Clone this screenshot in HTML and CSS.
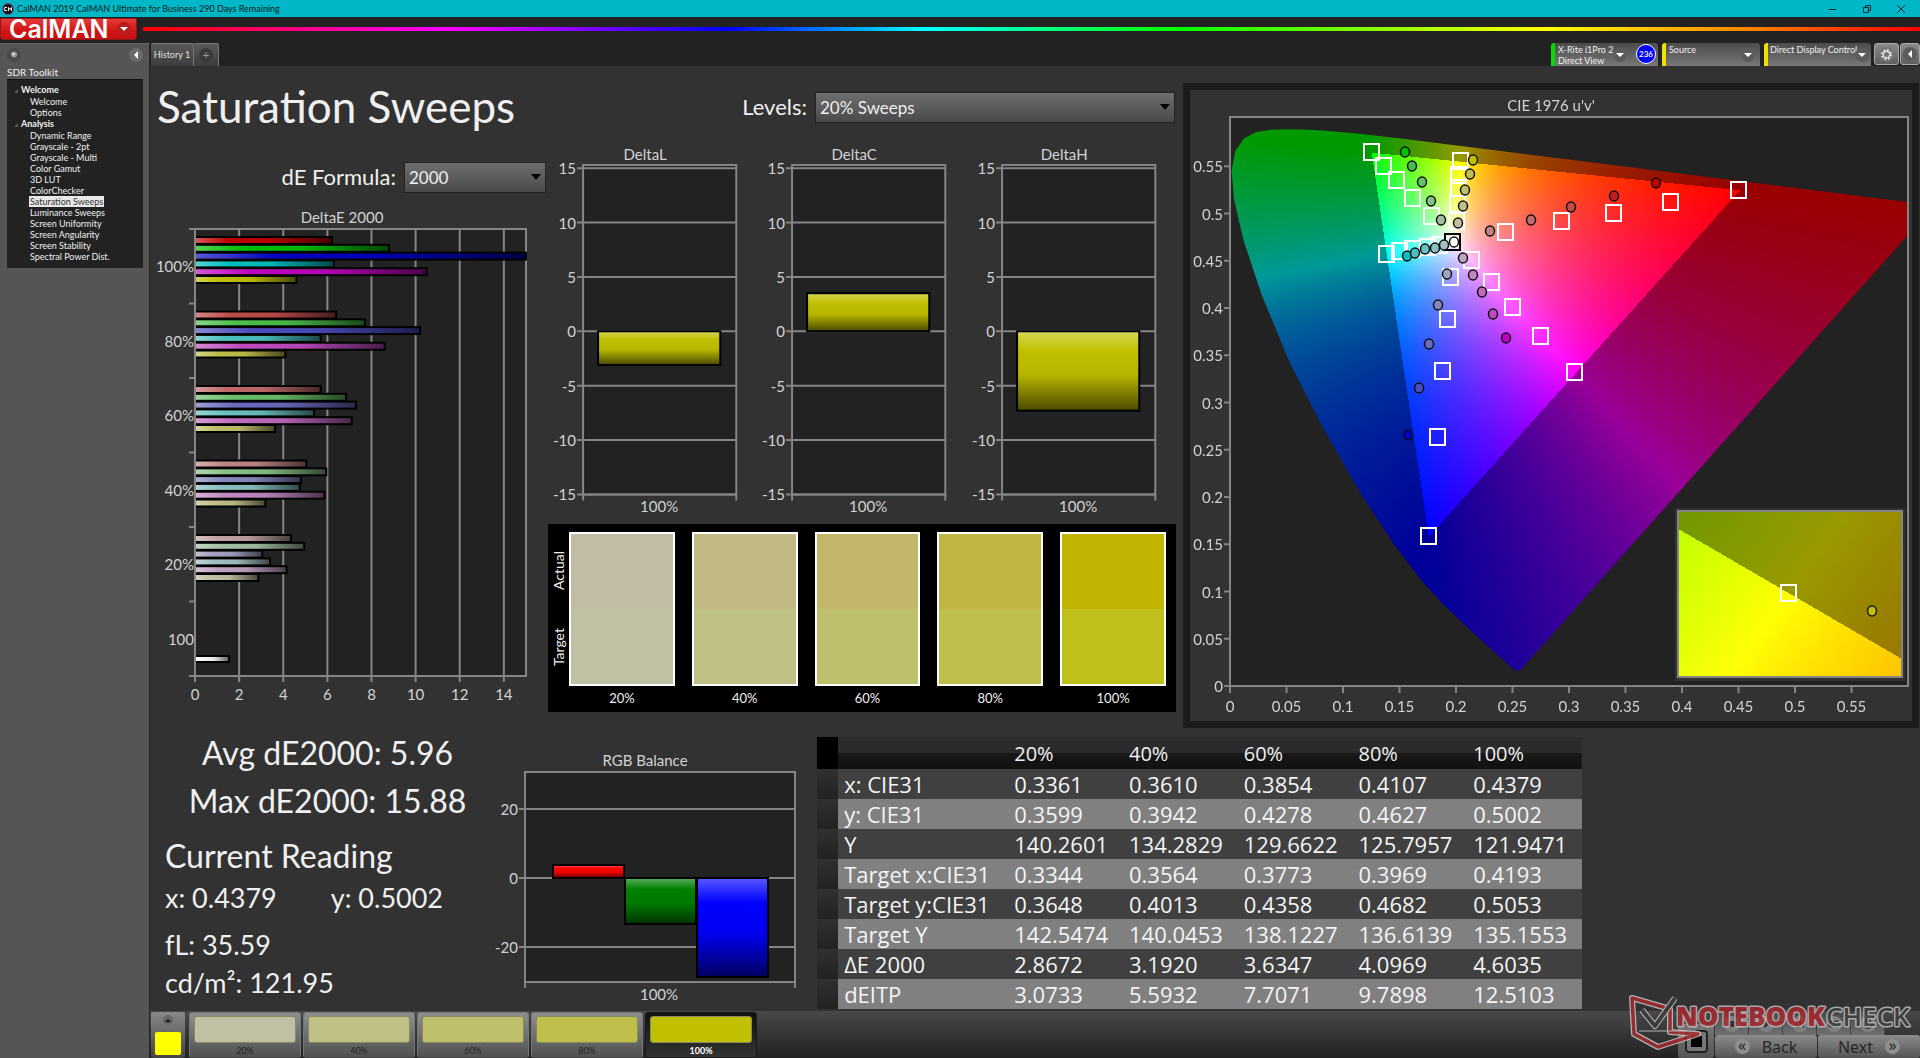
FILE: index.html
```html
<!DOCTYPE html>
<html lang="en">
<head>
<meta charset="utf-8">
<title>CalMAN 2019 CalMAN Ultimate for Business 290 Days Remaining</title>
<link rel="stylesheet" href="styles.css">
</head>
<body>
<div class="titlebar">
  <svg class="app-icon" viewBox="0 0 12 12" aria-hidden="true"><circle cx="6" cy="6" r="5.5" fill="#111" stroke="#a33a8c" stroke-width=".8"/><path d="M5 4.5Q2 3.5 2 6T5 7.500M6.500 8V4.500L8 6.500 9.500 4.500V8" fill="none" stroke="#fff"/></svg>
  <span class="window-title">CalMAN 2019 CalMAN Ultimate for Business 290 Days Remaining</span>
  <button class="win-btn" aria-label="Minimize"><svg viewBox="0 0 10 10"><path d="M1 5.500H8" /></svg></button>
  <button class="win-btn" aria-label="Restore"><svg viewBox="0 0 10 10"><path d="M1.500 3.500H6.500V8.500H1.500ZM3.500 3.500V1.500H8.500V6.500H6.500"/></svg></button>
  <button class="win-btn" aria-label="Close"><svg viewBox="0 0 10 10"><path d="M1 1L9 9M9 1L1 9"/></svg></button>
</div>
<header class="brandbar">
  <button class="brand">CalMAN<span class="knob"><i class="tri-down"></i></span></button>
  <div class="rainbow"></div>
</header>
<div class="shell">
  <aside class="sidebar">
    <div class="side-top">
      <svg class="ball" viewBox="0 0 14 14" aria-hidden="true"><circle cx="7" cy="7" r="7" fill="#4a4a4a"/><circle cx="7" cy="6.500" r="3" fill="#999"/><circle cx="6.500" cy="6" r="1.300" fill="#ddd"/></svg>
      <button class="knob" aria-label="Collapse"><i class="tri-left"></i></button>
    </div>
    <div class="side-title">SDR Toolkit</div>
    <nav class="tree">
      <div class="group">Welcome</div>
      <a href="#">Welcome</a>
      <a href="#">Options</a>
      <div class="group">Analysis</div>
      <a href="#">Dynamic Range</a>
      <a href="#">Grayscale - 2pt</a>
      <a href="#">Grayscale - Multi</a>
      <a href="#">Color Gamut</a>
      <a href="#">3D LUT</a>
      <a href="#">ColorChecker</a>
      <a href="#" class="current">Saturation Sweeps</a>
      <a href="#">Luminance Sweeps</a>
      <a href="#">Screen Uniformity</a>
      <a href="#">Screen Angularity</a>
      <a href="#">Screen Stability</a>
      <a href="#">Spectral Power Dist.</a>
    </nav>
  </aside>
  <div class="workspace">
    <div class="tabs">
      <button class="tab">History 1</button>
      <button class="tab tab-add" aria-label="Add tab"><span class="knob">+</span></button>
      <div class="spacer"></div>
      <button class="device meter"><span>X-Rite i1Pro 2<br>Direct View</span><span class="knob"><i class="tri-down"></i></span><b class="count">236</b></button>
      <button class="device"><span>Source</span><span class="knob"><i class="tri-down"></i></span></button>
      <button class="device wide"><span>Direct Display Control</span><span class="knob"><i class="tri-down"></i></span></button>
      <button class="square" aria-label="Settings"><svg viewBox="0 0 16 16"><circle cx="8" cy="8" r="8" fill="#757575"/><circle cx="8" cy="8" r="4.800" fill="none" stroke="#e6e6e6" stroke-width="2" stroke-dasharray="2 1.770"/><circle cx="8" cy="8" r="3.400" fill="none" stroke="#e6e6e6" stroke-width="1.300"/></svg></button>
      <button class="square last" aria-label="Collapse panel"><span class="knob"><i class="tri-left"></i></span></button>
    </div>
    <main class="content">
      <section class="upper">
        <div class="col-a">
          <h1>Saturation Sweeps</h1>
          <div class="field formula"><label for="formula">dE Formula:</label><span class="select"><select id="formula"><option>2000</option></select></span></div>
          <svg id="deltae" viewBox="0 0 398 507"></svg>
        </div>
        <div class="col-b">
          <div class="field levels"><label for="levels">Levels:</label><span class="select"><select id="levels"><option>20% Sweeps</option></select></span></div>
          <div class="deltas">
            <svg id="deltal" viewBox="0 0 209 378"></svg>
            <svg id="deltac" viewBox="0 0 209 378"></svg>
            <svg id="deltah" viewBox="0 0 209 378"></svg>
          </div>
          <div class="swatches">
            <div class="sides"><span>Actual</span><span>Target</span></div>
            <div class="swatch-row">
              <div class="swatch s20"><i></i>20%</div>
              <div class="swatch s40"><i></i>40%</div>
              <div class="swatch s60"><i></i>60%</div>
              <div class="swatch s80"><i></i>80%</div>
              <div class="swatch s100"><i></i>100%</div>
            </div>
          </div>
        </div>
        <div class="cie">
          <canvas id="gamut" width="722" height="631"></canvas>
          <svg id="ciemarks" viewBox="0 0 722 631"></svg>
        </div>
      </section>
      <section class="lower">
        <div class="readings">
          <p class="big center">Avg dE2000: 5.96</p>
          <p class="big center second">Max dE2000: 15.88</p>
          <h2 class="big">Current Reading</h2>
          <p class="pair"><span>x: 0.4379</span><span>y: 0.5002</span></p>
          <p class="lum">fL: 35.59</p>
          <p>cd/m²: 121.95</p>
        </div>
        <svg id="rgb" viewBox="0 0 310 266"></svg>
        <table>
          <colgroup><col class="c-mark"><col class="c-name"><col><col><col><col><col></colgroup>
          <thead><tr><td></td><th></th><th>20%</th><th>40%</th><th>60%</th><th>80%</th><th>100%</th></tr></thead>
          <tbody>
          <tr><td></td><th>x: CIE31</th><td>0.3361</td><td>0.3610</td><td>0.3854</td><td>0.4107</td><td>0.4379</td></tr>
          <tr><td></td><th>y: CIE31</th><td>0.3599</td><td>0.3942</td><td>0.4278</td><td>0.4627</td><td>0.5002</td></tr>
          <tr><td></td><th>Y</th><td>140.2601</td><td>134.2829</td><td>129.6622</td><td>125.7957</td><td>121.9471</td></tr>
          <tr><td></td><th>Target x:CIE31</th><td>0.3344</td><td>0.3564</td><td>0.3773</td><td>0.3969</td><td>0.4193</td></tr>
          <tr><td></td><th>Target y:CIE31</th><td>0.3648</td><td>0.4013</td><td>0.4358</td><td>0.4682</td><td>0.5053</td></tr>
          <tr><td></td><th>Target Y</th><td>142.5474</td><td>140.0453</td><td>138.1227</td><td>136.6139</td><td>135.1553</td></tr>
          <tr><td></td><th>ΔE 2000</th><td>2.8672</td><td>3.1920</td><td>3.6347</td><td>4.0969</td><td>4.6035</td></tr>
          <tr><td></td><th>dEITP</th><td>3.0733</td><td>5.5932</td><td>7.7071</td><td>9.7898</td><td>12.5103</td></tr>
          </tbody>
        </table>
      </section>
    </main>
    <footer class="bottombar">
      <button class="current-color" aria-label="Current colour"><span><i class="tri-up"></i></span><i class="chip"></i></button>
      <button class="tile t20"><i></i>20%</button>
      <button class="tile t40"><i></i>40%</button>
      <button class="tile t60"><i></i>60%</button>
      <button class="tile t80"><i></i>80%</button>
      <button class="tile t100 active"><i></i>100%</button>
      <div class="spacer"></div>
      <button class="window-btn" aria-label="Pattern window"><i></i></button>
      <div class="transport">
        <div class="media">
          <button aria-label="Stop"><svg viewBox="0 0 16 16"><circle cx="8" cy="8" r="8"/><path d="M5 5h6v6H5z"/></svg></button>
          <button aria-label="Play"><svg viewBox="0 0 16 16"><circle cx="8" cy="8" r="8"/><path d="M6 4l6 4-6 4z"/></svg></button>
          <button aria-label="Step"><svg viewBox="0 0 16 16"><circle cx="8" cy="8" r="8"/><path d="M4 4h2v8H4zM7 4l4 4-4 4zM11 4h1v8h-1z"/></svg></button>
          <button aria-label="Loop"><svg viewBox="0 0 16 16"><circle cx="8" cy="8" r="8"/><path d="M3 8a2.500 2.500 0 0 1 5 0 2.500 2.500 0 0 0 5 0 2.500 2.500 0 0 0-5 0 2.500 2.500 0 0 1-5 0z" class="line"/></svg></button>
          <button aria-label="Refresh"><svg viewBox="0 0 16 16"><circle cx="8" cy="8" r="8"/><path d="M12 8a4 4 0 1 1-2-3.500M10 2v3H7" class="line"/></svg></button>
        </div>
        <div class="pager">
          <button><span class="chev">«</span>Back</button>
          <button>Next<span class="chev">»</span></button>
        </div>
      </div>
      <svg class="watermark" viewBox="0 0 290 60" aria-label="NotebookCheck">
        <g fill="none" stroke-linejoin="round">
          <path d="M4 6L42 17L42 40L70 42L30 55L6 42Z" stroke="#c8c8c8" stroke-width="6"/>
          <path d="M4 6L42 17L42 40L70 42L30 55L6 42Z" stroke="#a52a2f" stroke-width="3.500"/>
          <path d="M11 39H68" stroke="#c8c8c8"/>
          <path d="M14 18L27 34L47 6" stroke="#d0d0d0" stroke-width="6"/>
          <path d="M14 18L27 34L47 6" stroke="#3c3c3c" stroke-width="4"/>
        </g>
        <text x="48" y="34" class="wm-red">NOTEBOOK</text>
        <text x="198" y="34" class="wm-dark">CHECK</text>
      </svg>
    </footer>
  </div>
</div>
<script src="script.js"></script>
</body>
</html>
```
FILE: styles.css
```css
* { box-sizing: border-box; }
body {
  margin: 0; min-height: 100vh; display: flex; flex-direction: column;
  background: #222; color: #f0f0f0; font: 16px/20px Lato, "Open Sans", sans-serif;
}
button, select { font: inherit; color: inherit; border: 0; padding: 0; margin: 0; background: none; }
i { display: block; }
a { color: inherit; text-decoration: none; }
.spacer { flex: 1; }
svg { display: block; }

.titlebar { display: flex; align-items: center; height: 17px; padding-left: 2px; background: #00b7c7; color: #071c20; }
.app-icon { width: 12px; height: 12px; margin-right: 3px; }
.window-title { flex: 1; font-size: 9px; line-height: 17px; }
.win-btn { width: 34px; height: 17px; display: grid; place-items: center; }
.win-btn:last-child { margin-right: 2px; }
.win-btn svg { width: 10px; height: 10px; fill: none; stroke: #072a30; }

.brandbar { display: flex; height: 26px; padding-top: 1px; gap: 6px; }
.brand {
  width: 137px; height: 22px; display: flex; align-items: center; justify-content: space-between;
  padding: 0 5px 0 8px; border: 1px solid #8a1a1a; border-radius: 0 0 3px 3px;
  background: linear-gradient(#e63a3a, #d01414 60%, #c81010); color: #fff; font: 600 25px/20px Inter, sans-serif;
}
.rainbow {
  flex: 1; height: 4px; margin-top: 9px;
  background: linear-gradient(90deg, #f00, #f0f 17%, #00f 33%, #0ff 44%, #0f0 58%, #ff0 79%, #f80 90%, #f00);
}
.knob { width: 14px; height: 14px; border-radius: 7px; display: grid; place-items: center; background: #5c5c5c; flex: none; }
.brand .knob { background: #b81c1c; }
.tri-down { border: 4px solid transparent; border-top-color: #fff; border-bottom-width: 0; }
.tri-left { border: 4px solid transparent; border-right-color: #fff; border-left-width: 0; }
.tri-up { border: 3px solid transparent; border-bottom-color: #111; border-top-width: 0; }

.shell { flex: 1; display: flex; }
.sidebar { width: 150px; flex: none; padding: 4px 6px 0 7px; background: #555; border-right: 1px solid #252525; border-top: 1px solid #666; }
.side-top { display: flex; justify-content: space-between; height: 16px; }
.side-top .knob { background: #6b6b6b; }
.ball { width: 14px; height: 14px; }
.side-title { height: 15px; font-size: 10px; line-height: 16px; }
.tree { padding: 4px 0 6px; background: #222; border-top: 1px solid #111; font-size: 9px; line-height: 11px; }
.tree a { display: block; width: max-content; margin-left: 22px; padding: 0 1px; height: 11px; }
.tree .group { padding-left: 14px; height: 12px; font-weight: bold; line-height: 12px; position: relative; }
.tree .group::before { content: ""; position: absolute; left: 7px; top: 5px; border: 2px solid transparent; border-right-color: #555; border-bottom-color: #555; }
.tree .current { background: #e8e8e8; color: #333; }

.workspace { flex: 1; min-width: 0; display: flex; flex-direction: column; background: #323232; }
.tabs { display: flex; height: 23px; background: #222; padding-left: 1px; }
.tab {
  width: 43px; border: 1px solid #777; border-width: 1px 1px 0 0; border-radius: 2px 2px 0 0; color: #e0e0e0;
  background: linear-gradient(#5a5a5a, #3c3c3c); font-size: 9px; line-height: 22px;
}
.tab-add { width: 25px; display: grid; place-items: center; }
.tab-add .knob { background: #3a3a3a; color: #999; font-size: 12px; line-height: 12px; }
.device {
  display: flex; gap: 4px; width: 98px; margin-right: 4px; padding: 0 5px 0 3px; text-align: left;
  border-left: 4px solid #f0e000; border-radius: 3px 3px 0 0; background: linear-gradient(#4c4c4c, #777);
  font-size: 9px; line-height: 11px; white-space: nowrap;
}
.device > span:first-child { flex: 1; padding-top: 1px; min-width: 0; }
.device .knob { margin-top: 5px; }
.device.meter { width: 107px; border-color: #0d0; padding-right: 2px; }
.device.wide { width: 107px; margin-right: 3px; gap: 0; padding: 0 2px; }
.count {
  width: 20px; height: 20px; margin: 1px 0 0 5px; border: 1px solid #fff; border-radius: 10px; background: #00f;
  text-align: center; font-size: 8px; line-height: 18px;
}
.square { width: 25px; height: 22px; margin-right: 1px; border: 1px solid #aaa; border-radius: 3px; background: linear-gradient(#8a8a8a, #5f5f5f); display: grid; place-items: center; }
.square svg { width: 15px; height: 15px; }
.square.last { width: 20px; margin: 0; }

.content { flex: 1; }
.upper { display: grid; grid-template-columns: 398fr 635fr 737fr; align-items: start; }
.upper > *, .lower > * { min-width: 0; }
.col-a h1 { margin: 0; padding: 12px 0 0 7px; height: 96px; font-weight: 400; font-size: 44px; line-height: 56px; }
.field { display: flex; align-items: center; gap: 8px; height: 30px; font-size: 22px; }
.field.formula { justify-content: flex-end; padding-right: 2px; margin-bottom: 13px; }
.select { position: relative; display: block; }
.select::after { content: ""; position: absolute; right: 5px; top: 12px; border: 5px solid transparent; border-top: 6px solid #000; border-bottom: 0; pointer-events: none; }
.select select {
  appearance: none; display: block; width: 100%; height: 31px; padding: 2px 18px 0 4px; border: 1px solid #222;
  background: linear-gradient(#6e6e6e, #4a4a4a); font-size: 17px; color: #eee;
}
.formula .select { width: 142px; }
.levels { margin: 26px 1px 23px 0; justify-content: flex-end; }
.levels .select { width: 360px; }
#deltae, #rgb { width: 100%; }
.col-b { padding-right: 7px; }
.deltas { display: grid; grid-template-columns: repeat(3, minmax(0, 1fr)); }
.deltas svg { width: 100%; }
.swatches { display: flex; height: 188px; padding: 8px 10px 0 0; background: #000; }
.sides { display: flex; flex-direction: column; width: 21px; height: 153px; justify-content: space-around; align-items: center; }
.sides span { writing-mode: vertical-rl; transform: rotate(180deg); font-size: 14px; line-height: 20px; }
.swatch-row { flex: 1; display: grid; grid-template-columns: repeat(5, minmax(0, 1fr)); gap: 17px; }
.swatch { text-align: center; font-size: 13px; line-height: 24px; }
.swatch i { height: 154px; border: 2px solid #fff; }
.s20 i { background: linear-gradient(#c1bca4 50%, #bfc0a4 50%); }
.s40 i { background: linear-gradient(#c2b985 50%, #c0c186 50%); }
.s60 i { background: linear-gradient(#c2b669 50%, #bfc06b 50%); }
.s80 i { background: linear-gradient(#c1b543 50%, #bec04b 50%); }
.s100 i { background: linear-gradient(#c2b400 50%, #c0c01c 50%); }
.cie { display: grid; margin: 17px 1px 0 0; padding: 7px; background: #1b1b1b; }
.cie > * { grid-area: 1 / 1; width: 100%; height: auto; }
.cie canvas { background: #323232; }

.lower { display: grid; grid-template-columns: 340fr 310fr 782fr 338fr; align-items: start; }
.readings { padding: 5px 0 0 15px; font-size: 27px; line-height: 36px; white-space: nowrap; }
.readings p, .readings h2 { margin: 0; }
.readings .big { font-size: 32px; line-height: 40px; font-weight: 400; }
.center { text-align: center; }
.center.second { padding-top: 8px; }
.readings h2 { padding-top: 15px; }
.pair { display: flex; gap: 54px; padding-top: 4px; }
.lum { padding: 11px 0 2px; }
#rgb { margin-top: 17px; }
table { width: calc(100% - 17px); margin: 9px 0 2px 17px; border-collapse: collapse; table-layout: fixed; font: 22px/28px "Open Sans", sans-serif; }
col { width: 15%; }
.c-mark { width: 21px; }
.c-name { width: 169px; }
td, th { padding: 0 0 0 6px; text-align: left; font-weight: 400; height: 30px; white-space: nowrap; }
thead tr { background: linear-gradient(#2b2b2b 50%, #181818 50%, #111); }
thead td, thead th { height: 32px; font-size: 20px; padding-top: 2px; }
tbody tr { background: #404040; color: #f4f4f4; }
tbody tr:nth-child(even) { background: #808080; }
tbody td:first-child { background: linear-gradient(#303030, #222); }
thead td:first-child { background: #000; }

.bottombar { position: relative; display: flex; height: 47px; padding: 1px 0 0 1px; background: linear-gradient(#484848, #222); }
.current-color { width: 34px; padding: 2px 4px; margin-right: 4px; border-radius: 2px; background: linear-gradient(#888, #444); }
.current-color span { display: grid; place-items: center; width: 10px; height: 10px; margin: 0 auto 7px; border-radius: 5px; background: #666; }
.chip { height: 23px; border-radius: 2px; background: #ff0; }
.tile {
  width: 112px; margin-right: 2px; padding: 3px 4px 0; border: 1px solid #777; border-bottom-color: #444; border-radius: 3px;
  background: linear-gradient(#8f8f8f, #505050); color: #222; font-size: 9px; line-height: 15px;
}
.tile i { height: 27px; border-radius: 3px; border: 1px solid #8a8a60; }
.t20 i { background: #bfc0a4; } .t40 i { background: #c0c186; } .t60 i { background: #bfc06b; } .t80 i { background: #bec04b; } .t100 i { background: #c0c000; }
.tile.active { background: linear-gradient(#111, #333); border-color: #1a1a1a; color: #fff; font-weight: bold; }
.window-btn { width: 36px; margin: 12px 1px 0 0; border-radius: 3px; background: linear-gradient(#777, #555); display: grid; place-items: center; }
.window-btn i { width: 23px; height: 23px; border: 6px solid #777; border-radius: 4px; background: #000; outline: 2px solid #222; outline-offset: -2px; }
.transport { width: 205px; }
.media { display: flex; height: 23px; }
.media button { width: 34px; display: grid; place-items: center; background: linear-gradient(#484848, #707070); border-right: 1px solid #444; }
.media svg { width: 16px; height: 16px; fill: #808080; }
.media path { fill: #333; }
.media path.line { fill: none; stroke: #333; stroke-width: 2; }
.pager { display: flex; gap: 1px; height: 23px; }
.pager button { width: 102px; display: flex; align-items: center; justify-content: center; gap: 12px; border-radius: 3px; background: linear-gradient(#8c8c8c, #555); color: #262626; font: 16px/22px "Noto Sans", sans-serif; }
.chev { width: 15px; height: 15px; border-radius: 8px; background: #8f8f8f; line-height: 12px; }
.watermark { position: absolute; right: 2px; bottom: 6px; width: 290px; height: 60px; opacity: .85; pointer-events: none; }
.watermark text { font: 26px "Open Sans", sans-serif; paint-order: stroke; stroke: #bbb; stroke-width: 3px; stroke-linejoin: round; }
.watermark .wm-red { font-weight: 800; fill: #a8282e; }
.watermark .wm-dark { font-weight: 600; fill: #3f3f3f; }

.ax { stroke: #858585; stroke-width: 2; fill: none; }
.plot { fill: #222; stroke: #858585; stroke-width: 2; }
.lab { fill: #d2d2d2; font-size: 15px; }
.mid { text-anchor: middle; }
.end { text-anchor: end; }
.bar { stroke: #000; stroke-width: 2; }
.target { fill: none; stroke: #fff; stroke-width: 2; }
.white-target { stroke: #000; }
.reading { stroke: #111; stroke-width: 1.5; }
```
FILE: script.js
```js
const put = (id, markup) => { document.getElementById(id).innerHTML = markup; };
const text = (x, y, cls, s) => `<text class="lab ${cls}" x="${x}" y="${y}">${s}</text>`;
const line = (x1, y1, x2, y2) => `<path class="ax" d="M${x1} ${y1}L${x2} ${y2}"/>`;

// Glossy fill: light start, body colour, dark end.
function gloss(id, c, vertical, light = 0.35) {
  const dir = vertical ? 'x2="0" y2="1"' : 'x2="1" y2="0"';
  const mix = (t, k) => 'rgb(' + c.map(v => Math.round(v + (t - v) * k)).join() + ')';
  return `<linearGradient id="${id}" x1="0" y1="0" ${dir}><stop offset="0" stop-color="${mix(255, light)}"/>` +
    `<stop offset=".25" stop-color="${mix(0, 0)}"/><stop offset=".55" stop-color="${mix(0, 0.05)}"/><stop offset="1" stop-color="${mix(0, 0.62)}"/></linearGradient>`;
}

// Horizontal dE 2000 bars, one group for each saturation level.
(function deltaE() {
  const left = 45, top = 24, unit = 22.06, step = 74.5;
  const groups = [
    ['100%', 190, 0, [6.2, 8.8, 15, 6.3, 10.5, 4.6]],
    ['80%', 190, 75, [6.4, 7.7, 10.2, 5.7, 8.6, 4.1]],
    ['60%', 192, 105, [5.7, 6.85, 7.3, 5.4, 7.1, 3.63]],
    ['40%', 192, 135, [5.05, 5.95, 4.8, 4.75, 5.87, 3.19]],
    ['20%', 192, 162, [4.35, 4.95, 3.05, 3.4, 4.15, 2.87]]
  ];
  const mask = [[1, 0, 0], [0, 1, 0], [0, 0, 1], [0, 1, 1], [1, 0, 1], [1, 1, 0]];
  let s = text(192, 18, 'mid', 'DeltaE 2000') + `<rect class="plot" x="${left}" y="${top}" width="331" height="447"/>`;
  for (let v = 0; v < 15; v += 2) {
    const x = left + v * unit;
    s += line(x, top, x, 477) + text(x, 495, 'mid', v);
  }
  for (let i = 0; i < 7; i++) s += line(39, top + i * step, left, top + i * step);
  groups.forEach(([name, hi, lo, vals], g) => {
    s += text(44, top + g * step + 43, 'end', name);
    vals.forEach((v, i) => {
      const id = `g${g}${i}`;
      s += gloss(id, mask[i].map(m => m ? hi : lo)) +
        `<rect class="bar" fill="url(#${id})" x="${left}" y="${top + g * step + 8 + i * 7.8}" width="${v * unit}" height="7"/>`;
    });
  });
  s += text(44, top + 5 * step + 43, 'end', '100') + gloss('gw', [245, 245, 245]) +
    `<rect class="bar" fill="url(#gw)" x="${left}" y="451" width="34" height="6"/>` + line(left, top, left, 471);
  put('deltae', s);
})();

function deltaChart(id, title, value) {
  const zero = 186, unit = 10.86;
  let s = text(97, 15, 'mid', title) + '<rect class="plot" x="35" y="20" width="153" height="329"/>';
  for (let v = -15; v <= 15; v += 5) {
    const y = zero - v * unit;
    s += line(29, y, 188, y) + text(28, y + 6, 'end', v);
  }
  const h = Math.abs(value) * unit;
  s += line(35, 349, 35, 355) + line(188, 349, 188, 355) + gloss(id + 'g', [192, 192, 0], true) +
    `<rect class="bar" fill="url(#${id}g)" x="50" y="${value > 0 ? zero - h : zero}" width="122" height="${h}"/>` +
    text(111, 366, 'mid', '100%');
  put(id, s);
}
deltaChart('deltal', 'DeltaL', -3.1);
deltaChart('deltac', 'DeltaC', 3.5);
deltaChart('deltah', 'DeltaH', -7.3);

(function rgbBalance() {
  let s = text(155, 21, 'mid', 'RGB Balance') + '<rect class="plot" x="35" y="27" width="270" height="210"/>';
  [[20, 64], [0, 133], [-20, 202]].forEach(([v, y]) => { s += line(29, y, 305, y) + text(28, y + 6, 'end', v); });
  s += line(35, 237, 35, 243) + line(305, 237, 305, 243);
  [[[255, 0, 0], 63, 120, 13], [[0, 128, 0], 135, 133, 46], [[0, 0, 255], 207, 133, 99]].forEach(([c, x, y, h], i) => {
    s += gloss('b' + i, c, true) + `<rect class="bar" fill="url(#b${i})" x="${x}" y="${y}" width="71" height="${h}"/>`;
  });
  put('rgb', s + text(169, 255, 'mid', '100%'));
})();

// CIE 1976 u'v' diagram.
const PLOT = { x: 40, y: 27, w: 678, h: 569, bottom: 596, su: 1130, sv: 949 };
const LOCUS = [[.1741, .005], [.1733, .0048], [.1714, .0051], [.1689, .0069], [.1644, .0109], [.1566, .0177], [.144, .0297],
  [.1355, .0399], [.1241, .0578], [.1096, .0868], [.0913, .1327], [.0687, .2007], [.0454, .295], [.0235, .4127], [.0082, .5384],
  [.0039, .6548], [.0139, .7502], [.0389, .812], [.0743, .8338], [.1142, .8262], [.1547, .8059], [.1929, .7816], [.2296, .7543],
  [.3016, .6923], [.3731, .6245], [.4441, .5547], [.5125, .4866], [.5752, .4242], [.627, .3725], [.6658, .334], [.6915, .3083],
  [.719, .2809], [.7347, .2653]];

function colour(u, v) {
  const X = 9 * u / (4 * v), Z = (12 - 3 * u - 20 * v) / (4 * v);
  const rgb = [3.2406 * X - 1.5372 - 0.4986 * Z, -0.9689 * X + 1.8758 + 0.0415 * Z, 0.0557 * X - 0.204 + 1.057 * Z];
  const k = Math.min(...rgb) < -0.0005 ? 153 : 255, max = Math.max(...rgb);
  return rgb.map(c => k * Math.pow(Math.max(c, 0) / max, 0.9));
}

function field(w, h, map) {
  const c = document.createElement('canvas');
  c.width = w; c.height = h;
  const g = c.getContext('2d'), img = g.createImageData(w, h);
  for (let y = 0, p = 0; y < h; y++) for (let x = 0; x < w; x++, p += 4) {
    const rgb = colour(...map(x, y));
    img.data[p] = rgb[0]; img.data[p + 1] = rgb[1]; img.data[p + 2] = rgb[2]; img.data[p + 3] = 255;
  }
  g.putImageData(img, 0, 0);
  return c;
}

(function gamut() {
  const g = document.getElementById('gamut').getContext('2d');
  g.fillStyle = '#222';
  g.fillRect(PLOT.x, PLOT.y, PLOT.w, PLOT.h);
  g.save();
  g.beginPath(); g.rect(PLOT.x, PLOT.y, PLOT.w, PLOT.h); g.clip();
  g.beginPath();
  LOCUS.forEach(([x, y]) => {
    const d = -2 * x + 12 * y + 3;
    g.lineTo(PLOT.x + 4 * x / d * PLOT.su, PLOT.bottom - 9 * y / d * PLOT.sv);
  });
  g.closePath(); g.clip();
  g.drawImage(field(PLOT.w, PLOT.h, (x, y) => [x / PLOT.su, Math.max(PLOT.h - y, 1) / PLOT.sv]), PLOT.x, PLOT.y);
  g.restore();

  // Magnified view around the yellow target.
  g.fillStyle = '#323232';
  g.fillRect(485, 418, 230, 173);
  g.drawImage(field(224, 166, (x, y) => {
    const dx = x - 110, dy = y - 82;
    const a = (84 * dx + 61 * dy) / 26746, b = (-130 * dx + 224 * dy) / 26746;
    return [0.2039 + a * 0.034 - b * 0.0002, 0.55295 - a * 0.00413 - b * 0.002];
  }), 488, 421);
})();

(function marks() {
  let s = '<rect class="ax" x="40" y="27" width="678" height="569"/><rect class="ax" x="488" y="421" width="224" height="166"/>' + text(361, 21, 'mid', "CIE 1976 u'v'");
  for (let i = 0; i < 12; i++) {
    const v = +(i * 0.05).toFixed(2), x = 40 + v * 1130, y = 596 - v * 945;
    s += line(x, 596, x, 603) + line(34, y, 40, y) + text(x, 622, 'mid', v) + text(33, y + 6, 'end', v);
  }
  const squares = [[181, 62], [193, 76], [206, 90], [222, 108], [241, 126], [270, 71], [268, 85], [268, 98], [267, 114], [266, 131],
    [196, 164], [209, 161], [222, 159], [237, 157], [249, 155], [315, 142], [371, 131], [423, 123], [480, 112], [548, 100],
    [281, 170], [301, 192], [322, 217], [350, 246], [384, 282], [260, 187], [257, 229], [252, 281], [247, 347], [238, 446], [598, 503]];
  const box = (x, y, cls) => `<rect class="target ${cls}" x="${x - 7}" y="${y - 8}" width="15" height="16"/>`;
  squares.forEach(([x, y]) => { s += box(x, y, ''); });
  s += box(262, 152, 'white-target');
  const circles = [
    ['#00c000', [215, 62]], ['#43bf4b', [222, 76]], ['#64c06b', [232, 92]], ['#84bf86', [241, 111]], ['#a0bfa4', [251, 130]],
    ['#c0c000', [283, 70]], ['#bfc04b', [280, 84]], ['#bfc06b', [275, 100]], ['#bfc086', [273, 116]], ['#bfc0a4', [268, 133]],
    ['#00c0c0', [217, 166]], ['#4bc0c0', [225, 163]], ['#6bc0c0', [235, 159]], ['#86c0c0', [245, 158]], ['#a4c0c0', [254, 155]],
    ['#c08686', [300, 141]], ['#c06b6b', [341, 130]], ['#c04b4b', [381, 117]], ['#c02020', [424, 106]], ['#c00000', [466, 93]],
    ['#c0a4c0', [273, 168]], ['#c086c0', [283, 185]], ['#c06bc0', [292, 202]], ['#c04bc0', [303, 224]], ['#c000c0', [316, 248]],
    ['#a4a4c0', [257, 184]], ['#8686c0', [248, 215]], ['#6b6bc0', [239, 254]], ['#4b4bc0', [229, 298]], ['#0000c0', [218, 345]],
    ['#ffffff', [264, 152]], ['#c0c000', [682, 521]]];
  circles.forEach(([c, [x, y]]) => { s += `<ellipse class="reading" fill="${c}" cx="${x}" cy="${y}" rx="4.500" ry="5"/>`; });
  put('ciemarks', s);
})();
```
